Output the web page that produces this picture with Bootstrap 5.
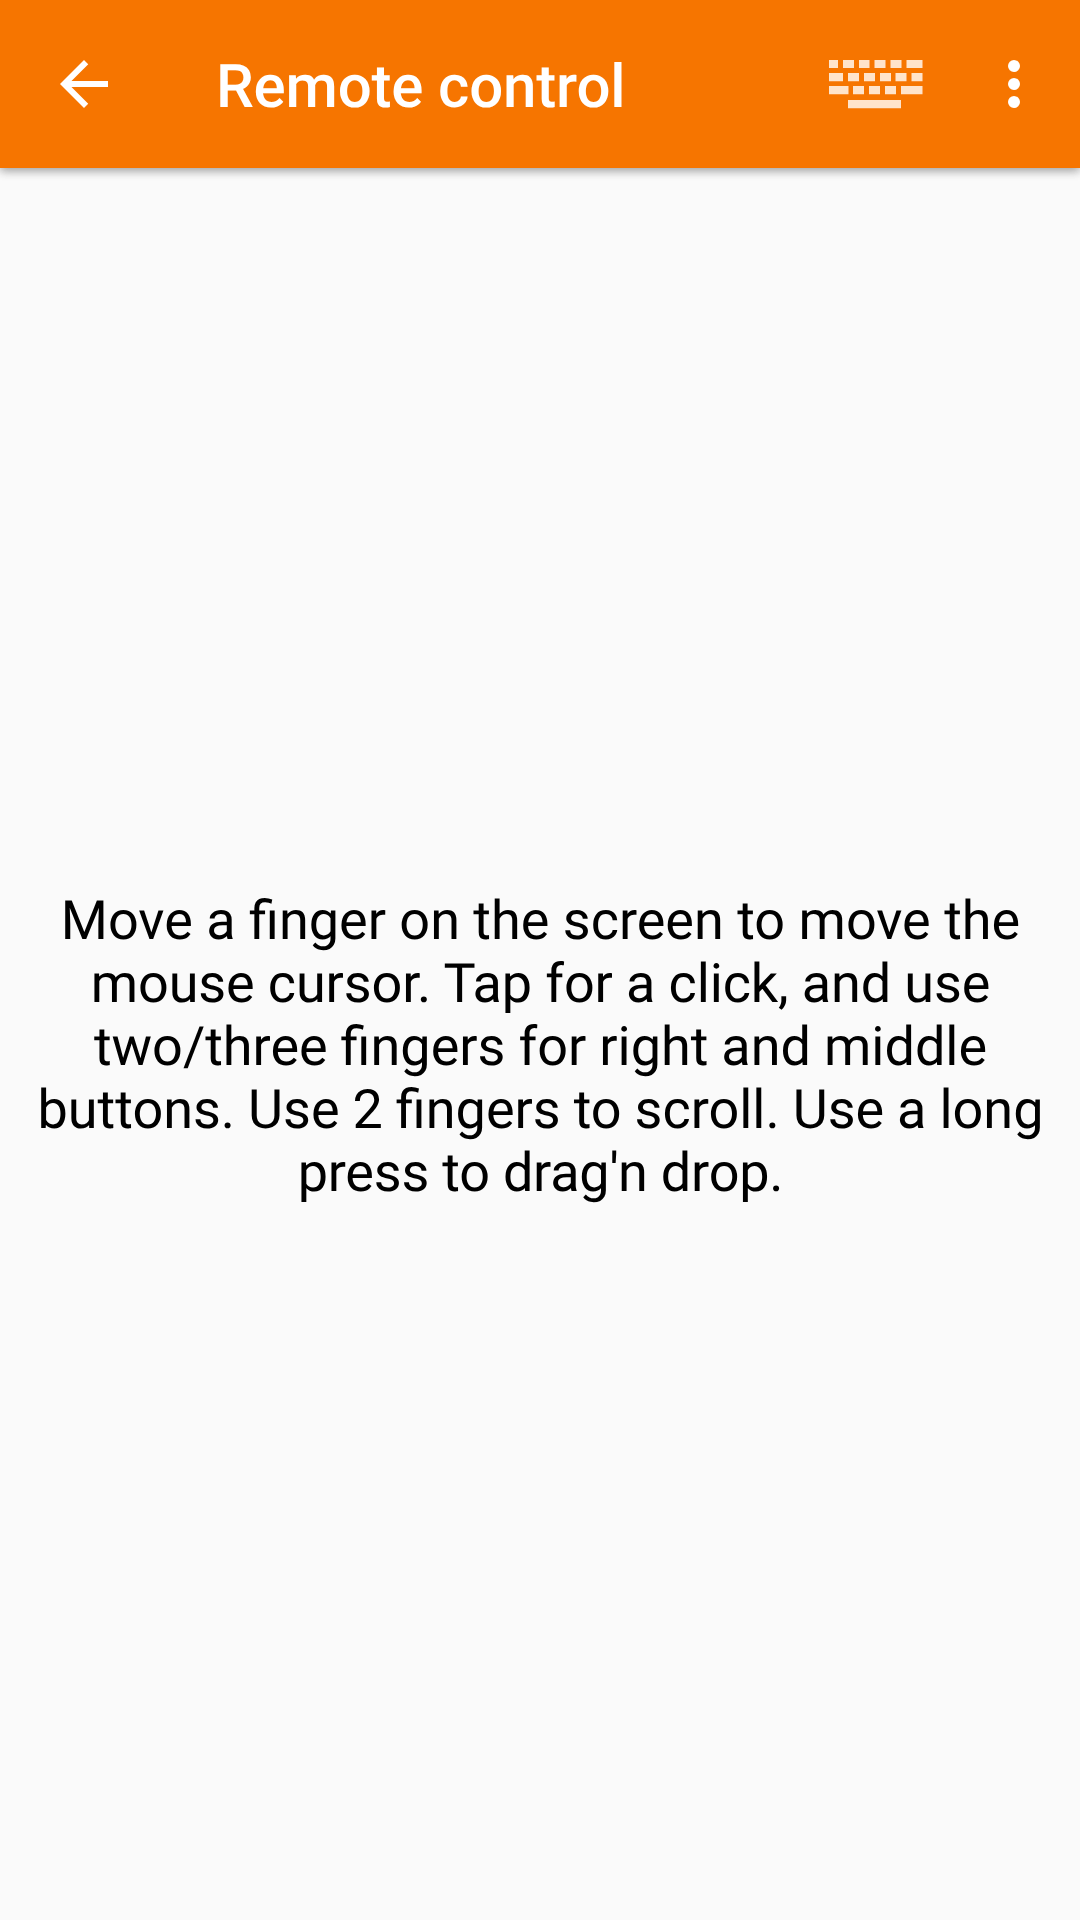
<!DOCTYPE html>
<html lang="en">
<head>
<meta charset="utf-8">
<meta name="viewport" content="width=device-width, initial-scale=1">
<title>Remote control</title>
<link rel="stylesheet" href="https://cdn.jsdelivr.net/npm/bootstrap@5.3.0/dist/css/bootstrap.min.css">
<style>
body { font-family: Roboto, "Noto Sans", sans-serif; background: #fafafa; color: #000; text-rendering: geometricPrecision; }
.app-bar { height: 168px; background: #f67500; padding: 0 30px 0 48px; box-shadow: 0 3px 9px rgba(0,0,0,.32), 0 0 12px rgba(0,0,0,.1); }
.app-title { font-size: 60px; line-height: 70px; font-weight: 500; letter-spacing: -.17px; margin-left: 96px; padding-top: 6px; }
.icon-btn { line-height: 0; color: #fff; border-radius: 0; }
.kbd-icon { margin-right: 54px; }
.hint { font-size: 54px; line-height: 63px; padding: 0 24px 0 25px; margin-top: 7px; }
.tight-letters { letter-spacing: -.13px; }
.tighter-letters { letter-spacing: -.22px; }
.tight-words { word-spacing: -.45px; }
</style>
</head>
<body>
<div class="d-flex flex-column vh-100 overflow-hidden">
  <header class="app-bar d-flex align-items-center flex-shrink-0 text-white">
    <button class="btn icon-btn border-0 p-0" type="button" aria-label="Back">
      <svg width="72" height="72" viewBox="0 0 24 24" fill="currentColor"><path d="M20 11H7.83l5.59-5.59L12 4l-8 8 8 8 1.41-1.41L7.83 13H20z"/></svg>
    </button>
    <h1 class="app-title mb-0 me-auto">Remote control</h1>
    <button class="btn icon-btn kbd-icon border-0 p-0" type="button" aria-label="Keyboard">
      <svg width="96" height="72" viewBox="0 0 96 72" fill="#ffe4cb">
        <path d="M1 12h9v8H1zM15 12h11v8H15zM31 12h10.500v8H31zM46.500 12h11v8h-11zM62.500 12h11v8h-11zM78.500 12h16v8h-16z"/>
        <path d="M1 25h14v8.300H1zM20 25h11v8.300H20zM36 25h11v8.300H36zM52 25h11v8.300H52zM67.500 25h11v8.300h-11zM83.500 25h11v8.300h-11z"/>
        <path d="M1 38h19.500v8.300H1zM25 38h11v8.300H25zM41 38h11v8.300H41zM57 38h11v8.300H57zM73 38h21.500v8.300H73zM20 52h53v8.300H20z"/>
      </svg>
    </button>
    <button class="btn icon-btn border-0 p-0" type="button" aria-label="More options">
      <svg width="72" height="72" viewBox="0 0 24 24" fill="currentColor"><circle cx="12" cy="6" r="2"/><circle cx="12" cy="12" r="2"/><circle cx="12" cy="18" r="2"/></svg>
    </button>
  </header>
  <main class="flex-grow-1 d-flex align-items-center justify-content-center">
    <p class="hint text-center mb-0">Move a finger on the screen to move the <span class="tight-letters">mouse cursor. Tap for a click, and use</span> <span class="tight-words">two/three fingers for right and middle buttons. Use 2 fingers to scroll. Use a long</span> <span class="tighter-letters">press to drag'n drop.</span></p>
  </main>
</div>
<script src="https://cdn.jsdelivr.net/npm/bootstrap@5.3.0/dist/js/bootstrap.bundle.min.js"></script>
</body>
</html>
